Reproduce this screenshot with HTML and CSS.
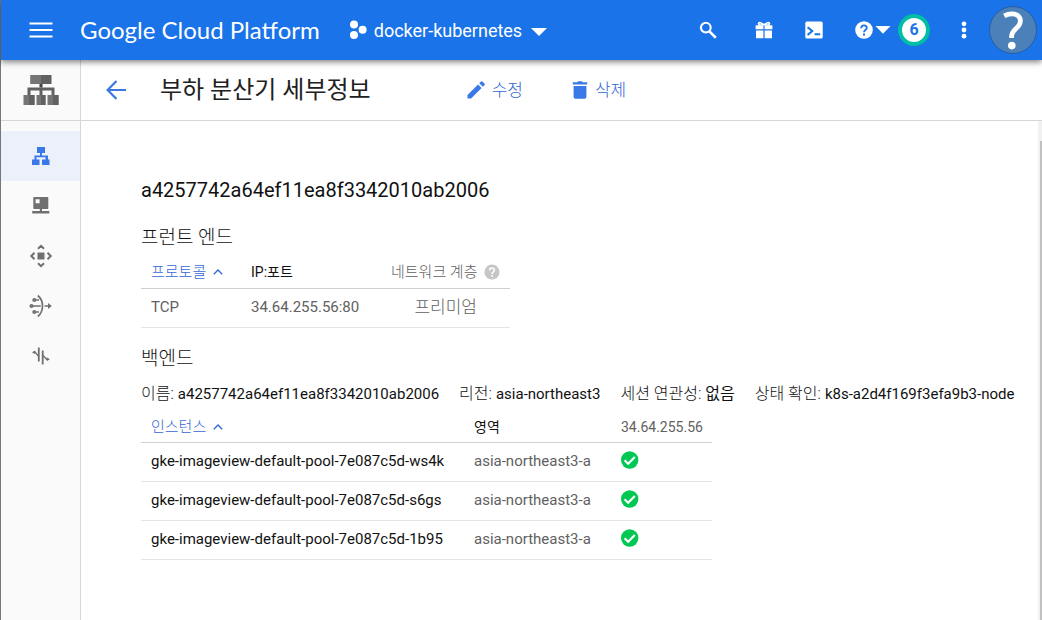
FILE: index.html
```html
<!DOCTYPE html>
<html lang="ko">
<head>
<meta charset="utf-8">
<meta name="viewport" content="width=device-width, initial-scale=1">
<title>부하 분산기 세부정보</title>
<link rel="stylesheet" href="styles.css">
</head>
<body>
<div class="app">
  <header class="topbar">
    <button class="icon-btn menu-btn" aria-label="Menu">
      <svg width="24" height="24" viewBox="0 0 24 24" fill="currentColor"><path d="M.5 4.500h23v2H.5zM.5 11h23v2H.5zM.5 17.500h23v2H.5z"/></svg>
    </button>
    <a class="brand" href="#">Google Cloud Platform</a>
    <button class="project">
      <svg width="18" height="20" viewBox="0 0 18 20" fill="currentColor"><circle cx="5" cy="4.600" r="4"/><circle cx="13.600" cy="9.800" r="4"/><circle cx="5" cy="15" r="4"/></svg>
      <span class="project-name">docker-kubernetes</span>
      <svg class="caret" width="16" height="8" viewBox="0 0 16 8" fill="currentColor"><path d="M0 0h16L8 8z"/></svg>
    </button>
    <div class="tools">
      <button class="icon-btn" aria-label="Search">
        <svg width="18" height="18" viewBox="0 0 18 18" fill="none" stroke="currentColor"><circle cx="6.800" cy="6.600" r="4.900" stroke-width="2.100"/><path d="M10.400 10.400l6.400 6.300" stroke-width="2.600"/></svg>
      </button>
      <button class="icon-btn" aria-label="Gift">
        <svg width="18" height="18" viewBox="0 0 18 18" fill="currentColor"><path d="M1 4.200h7.400v4H.6V4.600zM9.600 4.200H17l.4.400v3.600H9.600zM1 9.600h7.400v7.700H1.400L1 17zM9.600 9.600H17V17l-.4.300h-7z"/><path d="M2.600 2.600Q3.100.3 5.600.9L9 2.700l3.400-1.800q2.500-.6 3 1.700l-1 1.900H3.600z"/><path d="M4.600 2.200l2.200 1.100H4.800zM13.400 2.200l-2.200 1.100h2z" fill="#1a73e8"/></svg>
      </button>
      <button class="icon-btn" aria-label="Cloud Shell">
        <svg width="18" height="18" viewBox="0 0 18 18"><rect x=".3" y=".6" width="17.400" height="17" rx="1.600" fill="currentColor"/><path d="M2.600 6.300l4.700 3.800-4.700 3.800M9.600 13.200h5.600" fill="none" stroke="#1a73e8" stroke-width="2"/></svg>
      </button>
      <button class="icon-btn help" aria-label="Help">
        <svg width="18" height="18" viewBox="0 0 18 18"><circle cx="9" cy="9" r="8.800" fill="currentColor"/><path d="M6.200 7.200Q6.200 4.300 9 4.300t2.800 2.600C11.800 8.800 9 8.700 9 11.300" fill="none" stroke="#1a73e8" stroke-width="1.800"/><path d="M8 12.600h2v2H8z" fill="#1a73e8"/></svg>
        <svg width="16" height="8" viewBox="0 0 16 8" fill="currentColor"><path d="M.5 0h15L8 7.800z"/></svg>
      </button>
      <button class="count">6</button>
      <button class="icon-btn more" aria-label="More">
        <svg width="6" height="18" viewBox="0 0 6 18" fill="currentColor"><circle cx="3" cy="2.800" r="2.400"/><circle cx="3" cy="9" r="2.400"/><circle cx="3" cy="15.200" r="2.400"/></svg>
      </button>
      <button class="avatar" aria-label="Account">
        <svg width="48" height="48" viewBox="0 0 48 48"><circle cx="24" cy="24" r="23.500" fill="#4b80b8" stroke="#245ea6"/><path d="M15.200 9.800Q19 7.900 22.600 7.900c5.600 0 8.800 2.800 8.800 7 0 7.200-8.800 8-8.800 15.400v1.700" fill="none" stroke="#fff" stroke-width="4.800"/><circle cx="22.800" cy="39.600" r="3.800" fill="#fff"/></svg>
      </button>
    </div>
  </header>

  <div class="body">
    <aside class="sidebar">
      <a class="product" href="#" aria-label="Network services">
        <svg width="36" height="32" viewBox="0 0 36 32"><path d="M7.500 1h21v9h-21z" fill="#616161"/><path d="M7.500 1H18v9H7.500z" fill="#757575"/><path d="M4.500 13.500h27V21h-3v-4.500h-9V21h-3v-4.500h-9V21h-3z" fill="#616161"/><path d="M16.500 10h3v3.500h-3z" fill="#424242"/><path d="M.5 21h11v10H.5zM13.500 21h9v10h-9zM24.500 21h11v10h-11z" fill="#757575"/><path d="M6 21h5.500v10H6zM18 21h4.500v10H18zM30 21h5.500v10H30z" fill="#616161"/></svg>
      </a>
      <nav class="nav">
        <a class="nav-item active" href="#" aria-label="Load balancing">
          <svg width="20" height="20" viewBox="0 0 20 20" fill="currentColor"><path d="M6 1h8v6h-3v2.500h6v4h1.500V19H11v-5.500h3.500V11.300h-9v2.200H8.500V19H1v-5.500h2.500v-4H9V7H6z"/></svg>
        </a>
        <a class="nav-item" href="#" aria-label="Cloud DNS">
          <svg width="20" height="20" viewBox="0 0 20 20" fill="currentColor"><path fill-rule="evenodd" d="M3 1h13.500q.8 0 .8.800v10.500q0 .8-.8.800h-5.500v2h7.300v2.500H1.200v-2.500h7.600v-2H3.300q-1 0-1-.8V1.800Q2.300 1 3 1zM4.600 3.300v4h4v-4z"/></svg>
        </a>
        <a class="nav-item" href="#" aria-label="Cloud CDN">
          <svg width="24" height="24" viewBox="0 0 24 24"><path d="M8.500 8.500h7v7h-7z" fill="currentColor"/><path d="M9 4.800l3-3 3 3M9 19.200l3 3 3-3M5.500 8.800L2.300 12l3.200 3.200M18.500 8.800l3.200 3.200-3.200 3.200" fill="none" stroke="currentColor" stroke-width="2"/></svg>
        </a>
        <a class="nav-item" href="#" aria-label="Cloud NAT">
          <svg width="24" height="24" viewBox="0 0 24 24" fill="none" stroke="currentColor" stroke-width="1.700"><path d="M8.800 1.500q4.700 4 4.700 10.500t-4.700 10.500M3.800 12h8M6.500 6H10M6.500 18H10M15.500 12h6"/><circle cx="2.500" cy="12" r="1.200"/><circle cx="5.300" cy="6" r="1.200"/><circle cx="5.300" cy="18" r="1.200"/><path d="M19 9l3.800 3-3.800 3z" fill="currentColor" stroke="none"/></svg>
        </a>
        <a class="nav-item" href="#" aria-label="Traffic Director">
          <svg width="20" height="20" viewBox="0 0 20 20" fill="none" stroke="currentColor"><path d="M7.800 1.500v14M11.700 4.500v14" stroke-width="1.800"/><path d="M2 6.500l2-.5 3.800 4.500M11.700 9l3.800 4.300h1.500" stroke-width="1.300"/><path d="M1 6.500l3.200-2v3.500zM18.800 13.200l-3-2v4z" fill="currentColor" stroke="none"/></svg>
        </a>
      </nav>
    </aside>

    <main class="main">
      <div class="toolbar">
        <a class="back" href="#" aria-label="Back">
          <svg width="20" height="20" viewBox="0 0 20 20" fill="none" stroke="currentColor" stroke-width="2.200"><path d="M20 10H2M10.500 1L1.600 10l8.900 9"/></svg>
        </a>
        <h1 class="title">부하 분산기 세부정보</h1>
        <div class="actions">
          <button class="action">
            <svg width="18" height="18" viewBox="0 0 18 18" fill="currentColor"><path d="M.5 14L11 3.500 14.600 7.100 4.100 17.600H.5zM12.300 2.200L14 .5q.7-.6 1.400 0l2.200 2.200q.6.700 0 1.400l-1.700 1.700z"/></svg>
            <span>수정</span>
          </button>
          <button class="action">
            <svg width="16" height="18" viewBox="0 0 16 18" fill="currentColor"><path d="M.8 1.300h4.400L6.200.3h3.600l1 1h4.400v2.200H.8zM1.600 5h12.800v11q0 1.800-1.800 1.800H3.400q-1.800 0-1.800-1.800z"/></svg>
            <span>삭제</span>
          </button>
        </div>
      </div>

      <div class="scroller">
        <div class="content">
          <h2 class="lb-name">a4257742a64ef11ea8f3342010ab2006</h2>

          <section class="section">
            <h3 class="section-title">프런트 엔드</h3>
            <table class="table">
              <thead>
                <tr>
                  <th class="col-protocol"><button class="sort">프로토콜<svg width="10" height="6" viewBox="0 0 10 6" fill="none" stroke="currentColor" stroke-width="1.300"><path d="M.8 5.300L5 1l4.200 4.300"/></svg></button></th>
                  <th class="col-ip strong">IP:포트</th>
                  <th class="col-tier">네트워크 계층<svg class="hint" width="16" height="16" viewBox="0 0 16 16"><circle cx="8" cy="8" r="7.600" fill="#c6c6c6"/><path d="M5.600 6.400Q5.600 4 8 4t2.400 2.300C10.400 7.900 8 7.800 8 10" fill="none" stroke="#fff" stroke-width="1.600"/><path d="M7.200 11.100h1.700v1.700H7.200z" fill="#fff"/></svg></th>
                </tr>
              </thead>
              <tbody>
                <tr><td>TCP</td><td>34.64.255.56:80</td><td class="tier">프리미엄</td></tr>
              </tbody>
            </table>
          </section>

          <section class="section">
            <h3 class="section-title">백엔드</h3>
            <dl class="facts">
              <div class="fact"><dt>이름:</dt><dd>a4257742a64ef11ea8f3342010ab2006</dd></div>
              <div class="fact"><dt>리전:</dt><dd>asia-northeast3</dd></div>
              <div class="fact"><dt>세션 연관성:</dt><dd class="korean">없음</dd></div>
              <div class="fact"><dt>상태 확인:</dt><dd>k8s-a2d4f169f3efa9b3-node</dd></div>
            </dl>
            <table class="table">
              <thead>
                <tr>
                  <th class="col-instance"><button class="sort">인스턴스<svg width="10" height="6" viewBox="0 0 10 6" fill="none" stroke="currentColor" stroke-width="1.300"><path d="M.8 5.300L5 1l4.200 4.300"/></svg></button></th>
                  <th class="col-zone strong">영역</th>
                  <th class="col-health">34.64.255.56</th>
                </tr>
              </thead>
              <tbody>
                <tr><td><a class="instance" href="#">gke-imageview-default-pool-7e087c5d-ws4k</a></td><td>asia-northeast3-a</td><td><svg class="ok" width="18" height="18" viewBox="0 0 18 18"><circle cx="8.700" cy="9" r="8.700" fill="#00c853"/><path d="M3.600 9.200l3.600 3.600 6.600-6.900" fill="none" stroke="#fff" stroke-width="2.200"/></svg></td></tr>
                <tr><td><a class="instance" href="#">gke-imageview-default-pool-7e087c5d-s6gs</a></td><td>asia-northeast3-a</td><td><svg class="ok" width="18" height="18" viewBox="0 0 18 18"><circle cx="8.700" cy="9" r="8.700" fill="#00c853"/><path d="M3.600 9.200l3.600 3.600 6.600-6.900" fill="none" stroke="#fff" stroke-width="2.200"/></svg></td></tr>
                <tr><td><a class="instance" href="#">gke-imageview-default-pool-7e087c5d-1b95</a></td><td>asia-northeast3-a</td><td><svg class="ok" width="18" height="18" viewBox="0 0 18 18"><circle cx="8.700" cy="9" r="8.700" fill="#00c853"/><path d="M3.600 9.200l3.600 3.600 6.600-6.900" fill="none" stroke="#fff" stroke-width="2.200"/></svg></td></tr>
              </tbody>
            </table>
          </section>
        </div>
        <div class="scrollbar"><div class="thumb"></div></div>
      </div>
    </main>
  </div>
</div>
</body>
</html>
```
FILE: styles.css
```css
* { box-sizing: border-box; }

body {
  margin: 0;
  font-family: Roboto, "Noto Sans CJK KR", sans-serif;
  font-size: 15px;
  line-height: 20px;
  color: #111;
  background: #fff;
}

h1, h2, h3, dl, dt, dd { margin: 0; font-weight: 400; }
button { padding: 0; border: 0; background: none; font: inherit; color: inherit; cursor: pointer; }
a { color: inherit; text-decoration: none; }
svg { display: block; flex: none; }

.app {
  display: flex;
  flex-direction: column;
  min-height: 100vh;
  border-left: 1px solid #777;
}

/* Top bar */
.topbar {
  display: flex;
  align-items: center;
  height: 60px;
  padding: 0 5px 0 28px;
  background: #1a73e8;
  color: #fff;
  box-shadow: 0 2px 6px rgba(0, 0, 0, .5);
  z-index: 1;
}
.icon-btn { display: flex; align-items: center; }
.brand {
  margin-left: 27px;
  font-family: Lato, sans-serif;
  font-size: 24px;
  line-height: 30px;
  white-space: nowrap;
}
.project { display: flex; align-items: center; margin-left: 29px; white-space: nowrap; }
.project-name { margin-left: 7px; padding-top: 2px; font-size: 18px; line-height: 24px; }
.caret { margin-left: 9px; margin-top: 4px; }
.tools { display: flex; align-items: center; margin-left: auto; }
.tools .icon-btn { margin-right: 32px; }
.tools .icon-btn:first-child { margin-right: 38px; }
.tools .help { gap: 2px; margin-right: 7px; }
.count {
  width: 32px;
  height: 32px;
  margin-right: 31px;
  border: 4px solid #00bfa5;
  border-radius: 50%;
  background: #fff;
  color: #1a73e8;
  font-size: 16px;
  font-weight: 700;
  line-height: 24px;
}
.tools .more { margin-right: 22px; }

/* Layout */
.body { display: flex; flex: 1; }
.sidebar { width: 80px; flex: none; background: #fafafa; border-right: 1px solid #d6d6d6; }
.product {
  display: flex;
  align-items: center;
  justify-content: center;
  height: 61px;
  border-bottom: 1px solid #d6d6d6;
  color: #616161;
}
.nav { padding-top: 10px; }
.nav-item {
  display: flex;
  align-items: center;
  justify-content: center;
  height: 50px;
  color: #707070;
}
.nav-item.active { background: #ebf0fa; color: #3b78e7; }
.main { display: flex; flex-direction: column; flex: 1; min-width: 0; }

/* Page toolbar */
.toolbar {
  display: flex;
  align-items: center;
  height: 61px;
  padding-left: 25px;
  border-bottom: 1px solid #d6d6d6;
}
.back { color: #3b78e7; }
.title { margin-left: 34px; font-size: 24px; line-height: 32px; color: #212121; white-space: nowrap; }
.actions { display: flex; gap: 49px; margin-left: 96px; color: #3367d6; }
.action { display: flex; align-items: center; gap: 7px; font-size: 17px; font-weight: 300; line-height: 24px; }
.action svg { color: #3b78e7; }

/* Content */
.scroller { display: flex; flex: 1; }
.content { flex: 1; padding: 55px 20px 60px 60px; }
.lb-name { margin-bottom: 20px; font-size: 20px; line-height: 28px; }
.section { margin-bottom: 17px; }
.section-title { font-size: 19px; font-weight: 300; line-height: 28px; }

.table { border-collapse: collapse; text-align: left; }
.table th {
  height: 36px;
  padding: 5px 10px 0;
  border-bottom: 1px solid #cfcfcf;
  font-size: 14px;
  font-weight: 400;
  color: #616161;
  white-space: nowrap;
}
.table td {
  height: 39px;
  padding: 0 10px 2px;
  border-bottom: 1px solid #e5e5e5;
  color: #616161;
  white-space: nowrap;
}
.table .strong { color: #111; }
.sort { display: flex; align-items: center; gap: 7px; font-size: 15px; font-weight: 300; color: #3367d6; }
.instance { color: #111; }
.col-protocol { width: 100px; }
.col-ip { width: 140px; }
.table .col-tier { width: 129px; padding-right: 9px; font-size: 15px; font-weight: 300; }
.hint { display: inline-block; margin-left: 7px; vertical-align: -3px; }
.table .tier { padding-right: 33px; font-size: 17px; font-weight: 300; text-align: right; }
.col-instance { width: 323px; }
.col-zone { width: 147px; }
.col-health { width: 101px; }
.table .col-health { padding-right: 9px; }
.ok { margin-bottom: 2px; }

.facts { display: flex; flex-wrap: wrap; gap: 4px 20px; margin: 11px 0 3px; }
.fact { display: flex; gap: 4px; white-space: nowrap; }
.fact dt, .korean { font-size: 16px; }
.fact dt { font-weight: 300; }

.scrollbar { width: 4px; padding: 20px 0 0 2px; background: #f1f1f1; }
.thumb { height: 100%; background: #c1c1c1; }
```
